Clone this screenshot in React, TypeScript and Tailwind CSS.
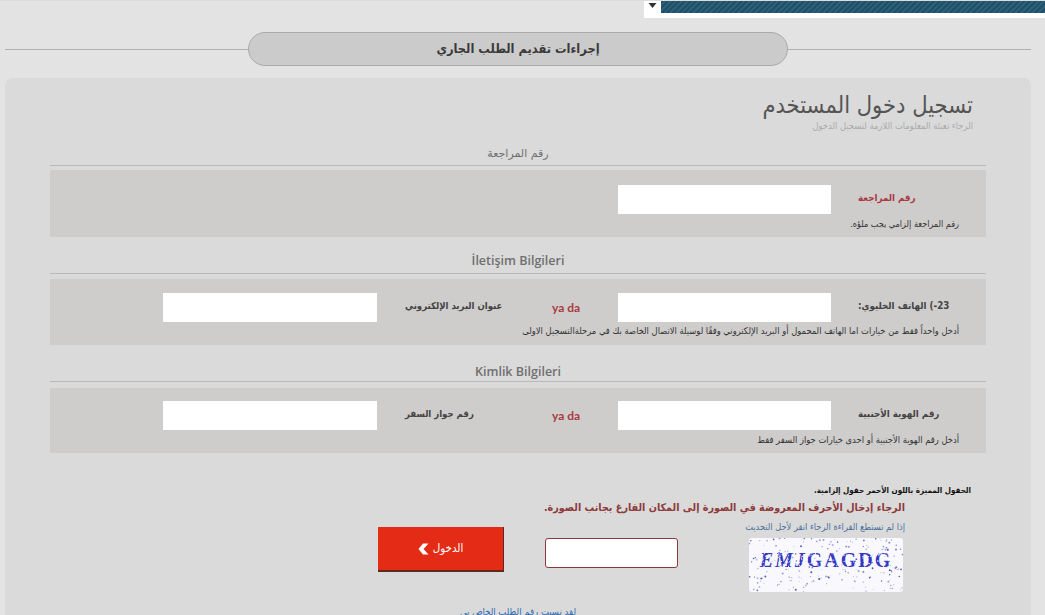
const dots = (() => {
  let s = 12345;
  const r = () => {
    s = (s * 16807) % 2147483647;
    return s / 2147483647;
  };
  return Array.from({ length: 210 }, () => ({ x: r() * 154, y: r() * 54, o: 0.25 + r() * 0.7, d: r() * 0.7 + 0.35 }));
})();
const specks = (() => {
  let s = 777;
  const r = () => {
    s = (s * 16807) % 2147483647;
    return s / 2147483647;
  };
  return Array.from({ length: 260 }, () => ({ x: 10 + r() * 134, y: 14 + r() * 16 }));
})();

function Section({
  title,
  turkish,
  className,
  headingClass,
  children,
}: {
  title: string;
  turkish?: boolean;
  className?: string;
  headingClass?: string;
  children: React.ReactNode;
}) {
  return (
    <section className={className}>
      <h2
        className={`h-[23px] border-b border-[#b9b9b9] text-center text-[#6f6f6f] ${headingClass ?? ""} ${
          turkish ? "font-['Open_Sans',sans-serif] text-[12.5px] font-semibold leading-[20px]" : "text-[11px] leading-[22px]"
        }`}
      >
        {title}
      </h2>
      {children}
    </section>
  );
}

function Row({
  label,
  labelClass,
  second,
  hint,
  hintClass,
  rowClass,
}: {
  label: string;
  labelClass?: string;
  second?: string;
  hint: string;
  hintClass: string;
  rowClass: string;
}) {
  return (
    <div className={`flex flex-col bg-[#cfcccc] font-stretch-condensed ${rowClass}`}>
      <div className="flex h-[29px] items-center">
        <div className="flex w-[568px] shrink-0 items-center pl-[113px]">
          {second ? (
            <>
              <input aria-label="field" className="h-[29px] w-[214px] shrink-0 bg-white outline-none" />
              <span className="mb-[3px] w-[160px] pl-[28px] text-left text-[9.5px] font-bold text-[#444]">
                <span dir="rtl">{second}</span>
              </span>
              <span className="w-[58px] whitespace-nowrap text-center font-['Lato',sans-serif] text-[12px] font-bold text-[#a83a40]">
                ya da
              </span>
            </>
          ) : null}
        </div>
        <input aria-label="field" className="h-[29px] w-[213px] shrink-0 bg-white outline-none" />
        <span className={`mb-[3px] ml-[27px] text-left text-[9.7px] font-bold ${labelClass ?? "text-[#444]"}`}>
          <span dir="rtl">{label}</span>
        </span>
      </div>
      <p dir="rtl" className={`whitespace-nowrap pr-[27px] leading-[14px] text-[#333] ${hintClass}`}>
        {hint}
      </p>
    </div>
  );
}

export default function App() {
  return (
    <div
      dir="ltr"
      className="flex h-[615px] w-[1045px] flex-col overflow-hidden border-t border-[#dcdcdc] bg-[#e3e3e3] font-['DejaVu_Sans','Liberation_Sans',sans-serif]"
    >
      <div className="flex h-[17px] shrink-0 justify-end">
        <div className="flex w-[401px] items-start bg-white">
          <div className="flex h-[12px] w-[17px] items-start justify-center pt-[2px]">
            <svg width="9" height="5" viewBox="0 0 9 5">
              <path d="M0.5 0h8L4.5 5z" fill="#333" />
            </svg>
          </div>
          <div className="h-[12px] flex-1 bg-[repeating-linear-gradient(135deg,#1f5068_0,#1f5068_2px,#2c6078_2px,#2c6078_4px)]" />
        </div>
      </div>

      <div className="mx-[5px] mt-[14px] flex h-[34px] w-[1026px] shrink-0 items-center">
        <div className="h-px flex-1 bg-[#b0b0b0]" />
        <h1
          dir="rtl"
          className="flex h-[34px] w-[540px] items-center justify-center rounded-full border border-[#aaaaaa] bg-[#cbcbcb] text-[12.75px] font-bold text-[#3a3a3a] font-stretch-condensed"
        >
          إجراءات تقديم الطلب الجاري
        </h1>
        <div className="h-px flex-1 bg-[#b0b0b0]" />
      </div>

      <main className="mx-[5px] mt-[12px] w-[1026px] flex-1 rounded-t-[8px] bg-[#dadada] px-[45px]">
        <header dir="rtl" className="h-[65px] pr-[13px] pt-[10px] text-right font-stretch-condensed">
          <div className="text-[23.5px] leading-[34px] text-[#555555]">تسجيل دخول المستخدم</div>
          <div className="-mt-[2px] text-[9.3px] leading-[12px] text-[#aaaaaa]">الرجاء تعبئة المعلومات اللازمة لتسجيل الدخول</div>
        </header>

        <Section title="رقم المراجعة">
          <Row
            rowClass="mt-[4px] h-[67px] pt-[15px]"
            label="رقم المراجعة"
            labelClass="text-[#a83a40]"
            hintClass="mt-[3px] text-[9px]"
            hint="رقم المراجعة إلزامي يجب ملؤه."
          />
        </Section>

        <Section title="İletişim Bilgileri" turkish className="mt-[14px]">
          <Row
            rowClass="mt-[5px] h-[66px] pt-[14px]"
            label="23-) الهاتف الخليوي:"
            second="عنوان البريد الإلكتروني"
            hintClass="mt-[2px] text-[9.3px]"
            hint="أدخل واحداً فقط من خيارات اما الهاتف المحمول أو البريد الإلكتروني وفقًا لوسيلة الاتصال الخاصة بك في مرحلةالتسجيل الاولى"
          />
        </Section>

        <Section title="Kimlik Bilgileri" turkish className="mt-[14px]" headingClass="pt-[3px]">
          <Row
            rowClass="mt-[6px] h-[65px] pt-[13px]"
            label="رقم الهوية الأجنبية"
            second="رقم جواز السفر"
            hintClass="mt-[3px] text-[9.3px]"
            hint="أدخل رقم الهوية الأجنبية أو احدى خيارات جواز السفر فقط"
          />
        </Section>

        <div className="font-stretch-condensed">
          <p dir="rtl" className="mt-[31px] pr-[15px] text-[8px] font-bold leading-[14px] text-[#111]">
            الحقول المميزة باللون الأحمر حقول إلزامية.
          </p>
          <p dir="rtl" className="mt-[2px] whitespace-nowrap pr-[81px] text-[10.7px] font-bold leading-[16px] text-[#8e3a3a]">
            الرجاء إدخال الأحرف المعروضة في الصورة إلى المكان الفارغ بجانب الصورة.
          </p>
          <div className="mt-[4px] flex items-start pl-[328px]">
            <button className="mt-[7px] flex h-[45px] w-[126px] items-center justify-center gap-[4px] border-b-2 border-r border-[#5c2a1e] bg-[#e32b16] text-[11.5px] text-white">
              <svg width="11" height="12" viewBox="0 0 11 12">
                <path d="M5 0.5 10.5 0.5 5.5 6 10.5 11.5 5 11.5 0.5 6z" fill="#fff" />
              </svg>
              <span dir="rtl">الدخول</span>
            </button>
            <input
              aria-label="captcha"
              className="ml-[41px] mt-[18px] h-[30px] w-[133px] rounded-[3px] border border-[#8a3a3a] bg-white outline-none"
            />
            <div className="ml-[66px] flex w-[161px] flex-col items-end">
              <p dir="rtl" className="whitespace-nowrap text-[9.2px] leading-[14px] text-[#4a6f9a]">
                إذا لم تستطع القراءة الرجاء انقر لأجل التحديث
              </p>
              <svg width="154" height="54" viewBox="0 0 154 54" className="mr-[2px] mt-[4px] rounded-[3px] bg-[#f9f9fd]">
                {dots.map((d, i) => (
                  <circle key={i} cx={d.x} cy={d.y} r={d.d} fill="#3f3fb0" opacity={d.o} />
                ))}
                <text
                  x="77"
                  y="29"
                  textAnchor="middle"
                  fontFamily="'Liberation Serif', serif"
                  fontWeight="700"
                  fontSize="20"
                  letterSpacing="2"
                  fill="#3338c4"
                >
                  <tspan fontStyle="italic">EMJ</tspan>
                  <tspan>GAGDG</tspan>
                </text>
                {specks.map((d, i) => (
                  <rect key={i} x={d.x} y={d.y} width="1" height="1" fill="#f9f9fd" />
                ))}
              </svg>
            </div>
          </div>
          <p dir="rtl" className="mt-[13px] text-center text-[9.5px] leading-[14px] text-[#2f6cb0]">
            لقد نسيت رقم الطلب الخاص بي
          </p>
        </div>
      </main>
    </div>
  );
}
